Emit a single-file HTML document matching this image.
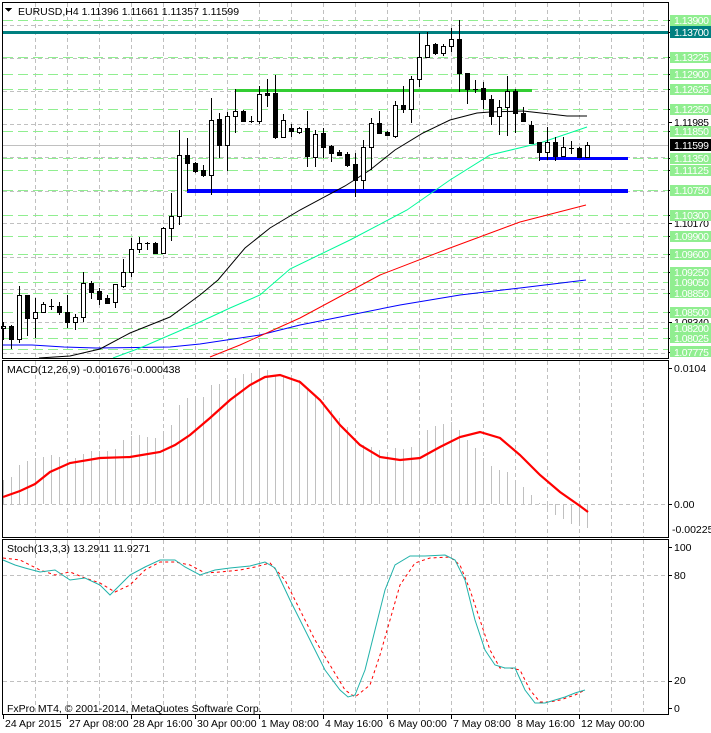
<!DOCTYPE html>
<html><head><meta charset="utf-8"><style>
html,body{margin:0;padding:0;background:#fff;width:711px;height:733px;overflow:hidden}
svg{display:block}
text{font-family:"Liberation Sans",sans-serif;font-size:10.5px}
</style></head><body>
<svg width="711" height="733" viewBox="0 0 711 733" xmlns="http://www.w3.org/2000/svg" shape-rendering="crispEdges">
<rect width="711" height="733" fill="#fff"/>
<g stroke="#c0c0c0" stroke-dasharray="4,3">
<path d="M35.5 3V358M67.5 3V358M99.5 3V358M131.5 3V358M163.5 3V358M195.5 3V358M227.5 3V358M259.5 3V358M291.5 3V358M323.5 3V358M355.5 3V358M387.5 3V358M419.5 3V358M451.5 3V358M483.5 3V358M515.5 3V358M547.5 3V358M579.5 3V358M611.5 3V358M643.5 3V358"/>
<path d="M35.5 361V537M67.5 361V537M99.5 361V537M131.5 361V537M163.5 361V537M195.5 361V537M227.5 361V537M259.5 361V537M291.5 361V537M323.5 361V537M355.5 361V537M387.5 361V537M419.5 361V537M451.5 361V537M483.5 361V537M515.5 361V537M547.5 361V537M579.5 361V537M611.5 361V537M643.5 361V537"/>
<path d="M35.5 540V714M67.5 540V714M99.5 540V714M131.5 540V714M163.5 540V714M195.5 540V714M227.5 540V714M259.5 540V714M291.5 540V714M323.5 540V714M355.5 540V714M387.5 540V714M419.5 540V714M451.5 540V714M483.5 540V714M515.5 540V714M547.5 540V714M579.5 540V714M611.5 540V714M643.5 540V714"/>
<path d="M3 25.5H668M3 58.5H668M3 91.5H668M3 124.5H668M3 157.5H668M3 191.5H668M3 223.5H668M3 257.5H668M3 289.5H668M3 322.5H668M3 353.5H668"/>
<path d="M3 504.5H668M3 575.5H668M3 681.5H668"/>
</g>
<g stroke="#90ee90" stroke-dasharray="10,5">
<path d="M3 20.5H668M3 57.5H668M3 74.5H668M3 89.5H668M3 109.5H668M3 131.5H668M3 158.5H668M3 170.5H668M3 190.5H668M3 215.5H668M3 236.5H668M3 254.5H668M3 272.5H668M3 282.5H668M3 293.5H668M3 312.5H668M3 328.5H668M3 338.5H668M3 349.5H668"/>
</g>
<path d="M3 145.5H668" stroke="#c0c0c0"/>
<rect x="3" y="31" width="665" height="3" fill="#008080"/>
<rect x="235" y="89" width="297" height="3" fill="#32cd32"/>
<rect x="187" y="189" width="441" height="4" fill="#0000ff"/>
<rect x="539" y="157" width="89" height="3" fill="#0000ff"/>
<g fill="none" shape-rendering="auto" stroke-width="1">
<polyline stroke="#0000ff" points="2,345 32,345 64,347 96,348 170,347 200,344 260,335 300,325 400,305 460,295 520,288 586,280"/>
<polyline stroke="#ff0000" points="210,357 240,345 300,318 380,275 450,248 520,222 586,205"/>
<polyline stroke="#00fa9a" points="113,358 140,348 170,335 200,322 230,308 260,295 290,269 350,240 407,210 450,180 490,155 540,143 587,127"/>
<polyline stroke="#000" points="39,358 70,356 100,349 130,333 170,317 200,295 218,280 245,248 270,228 300,210 345,186 370,170 395,150 423,133 450,120 477,113 490,112 523,111 550,114 567,116 587,116"/>
</g>
<path stroke="#000" fill="none" d="M3.5 322V340M11.5 325V349M19.5 286V343M27.5 295V336M35.5 298V338M43.5 302V313M51.5 299V310M49 306.5H54M59.5 302V315M67.5 295V328M75.5 314V330M83.5 272V322M91.5 281V299M99.5 288V305M107.5 295V303M115.5 284V308M123.5 259V288M131.5 238V277M139.5 237V253M147.5 242V250M145 243.5H150M155.5 242V254M163.5 227V254M171.5 193V241M179.5 130V225M187.5 138V191M195.5 162V173M203.5 165V177M211.5 98V195M219.5 113V158M227.5 112V171M235.5 89V133M243.5 110V122M251.5 116V123M249 121.5H254M259.5 86V124M267.5 79V107M275.5 75V139M283.5 114V137M291.5 124V137M299.5 127V134M307.5 111V167M315.5 130V167M323.5 128V158M331.5 145V162M339.5 150V156M347.5 152V167M355.5 153V197M363.5 140V189M371.5 118V170M379.5 111V134M387.5 131V136M395.5 101V138M403.5 86V113M411.5 76V123M419.5 33V87M427.5 32V57M435.5 43V55M443.5 44V56M451.5 28V52M459.5 20V92M467.5 73V104M475.5 80V93M473 89.5H478M483.5 82V109M491.5 95V125M499.5 100V135M507.5 76V136M515.5 89V133M523.5 107V122M531.5 121V143M539.5 142V161M547.5 127V160M555.5 137V161M563.5 137V157M571.5 141V154M569 148.5H574M579.5 147V158M587.5 142V158"/>
<g stroke="#000">
<g fill="#fff">
<rect x="1.5" y="326.5" width="4" height="2"/><rect x="17.5" y="295.5" width="4" height="44"/><rect x="33.5" y="312.5" width="4" height="6"/><rect x="41.5" y="304.5" width="4" height="8"/><rect x="73.5" y="317.5" width="4" height="5"/><rect x="81.5" y="283.5" width="4" height="34"/><rect x="113.5" y="284.5" width="4" height="18"/><rect x="121.5" y="272.5" width="4" height="14"/><rect x="129.5" y="249.5" width="4" height="23"/><rect x="137.5" y="243.5" width="4" height="6"/><rect x="161.5" y="228.5" width="4" height="25"/><rect x="169.5" y="216.5" width="4" height="12"/><rect x="177.5" y="155.5" width="4" height="61"/><rect x="209.5" y="120.5" width="4" height="55"/><rect x="225.5" y="116.5" width="4" height="29"/><rect x="233.5" y="111.5" width="4" height="5"/><rect x="257.5" y="94.5" width="4" height="27"/><rect x="281.5" y="120.5" width="4" height="17"/><rect x="297.5" y="128.5" width="4" height="4"/><rect x="313.5" y="134.5" width="4" height="23"/><rect x="361.5" y="147.5" width="4" height="33"/><rect x="369.5" y="123.5" width="4" height="24"/><rect x="393.5" y="105.5" width="4" height="31"/><rect x="409.5" y="79.5" width="4" height="30"/><rect x="417.5" y="57.5" width="4" height="22"/><rect x="425.5" y="45.5" width="4" height="12"/><rect x="441.5" y="46.5" width="4" height="7"/><rect x="449.5" y="39.5" width="4" height="7"/><rect x="497.5" y="107.5" width="4" height="9"/><rect x="505.5" y="91.5" width="4" height="16"/><rect x="545.5" y="142.5" width="4" height="10"/><rect x="561.5" y="147.5" width="4" height="9"/><rect x="585.5" y="145.5" width="4" height="12"/>
</g>
<g fill="#000">
<rect x="9.5" y="326.5" width="4" height="13"/><rect x="25.5" y="295.5" width="4" height="23"/><rect x="57.5" y="306.5" width="4" height="6"/><rect x="65.5" y="312.5" width="4" height="10"/><rect x="89.5" y="283.5" width="4" height="9"/><rect x="97.5" y="291.5" width="4" height="8"/><rect x="105.5" y="298.5" width="4" height="5"/><rect x="153.5" y="243.5" width="4" height="10"/><rect x="185.5" y="155.5" width="4" height="8"/><rect x="193.5" y="163.5" width="4" height="8"/><rect x="201.5" y="170.5" width="4" height="5"/><rect x="217.5" y="119.5" width="4" height="26"/><rect x="241.5" y="111.5" width="4" height="10"/><rect x="265.5" y="93.5" width="4" height="2"/><rect x="273.5" y="93.5" width="4" height="44"/><rect x="289.5" y="128.5" width="4" height="3"/><rect x="305.5" y="128.5" width="4" height="28"/><rect x="321.5" y="133.5" width="4" height="14"/><rect x="329.5" y="146.5" width="4" height="7"/><rect x="337.5" y="152.5" width="4" height="3"/><rect x="345.5" y="154.5" width="4" height="11"/><rect x="353.5" y="164.5" width="4" height="16"/><rect x="377.5" y="123.5" width="4" height="10"/><rect x="385.5" y="132.5" width="4" height="3"/><rect x="401.5" y="105.5" width="4" height="4"/><rect x="433.5" y="44.5" width="4" height="9"/><rect x="457.5" y="39.5" width="4" height="34"/><rect x="465.5" y="73.5" width="4" height="16"/><rect x="481.5" y="88.5" width="4" height="11"/><rect x="489.5" y="99.5" width="4" height="17"/><rect x="513.5" y="91.5" width="4" height="22"/><rect x="521.5" y="113.5" width="4" height="8"/><rect x="529.5" y="125.5" width="4" height="18"/><rect x="537.5" y="142.5" width="4" height="10"/><rect x="553.5" y="142.5" width="4" height="14"/><rect x="577.5" y="148.5" width="4" height="9"/>
</g>
</g>
<path stroke="#c0c0c0" d="M3.5 504V480M11.5 504V477M19.5 504V465M27.5 504V461M35.5 504V458M43.5 504V457M51.5 504V455M59.5 504V457M67.5 504V459M75.5 504V458M83.5 504V454M91.5 504V451M99.5 504V451M107.5 504V451M115.5 504V449M123.5 504V440M131.5 504V436M139.5 504V435M147.5 504V437M155.5 504V438M163.5 504V434M171.5 504V425M179.5 504V405M187.5 504V398M195.5 504V396M203.5 504V397M211.5 504V385M219.5 504V384M227.5 504V380M235.5 504V378M243.5 504V374M251.5 504V373M259.5 504V372M267.5 504V370M275.5 504V376M283.5 504V376M291.5 504V378M299.5 504V380M307.5 504V390M315.5 504V395M323.5 504V402M331.5 504V410M339.5 504V418M347.5 504V427M355.5 504V440M363.5 504V445M371.5 504V447M379.5 504V450M387.5 504V452M395.5 504V448M403.5 504V449M411.5 504V447M419.5 504V438M427.5 504V430M435.5 504V426M443.5 504V424M451.5 504V422M459.5 504V430M467.5 504V440M475.5 504V448M483.5 504V458M491.5 504V466M499.5 504V470M507.5 504V472M515.5 504V480M523.5 504V487M531.5 504V495M539.5 504V503M547.5 504V508M555.5 504V515M563.5 504V519M571.5 504V524M579.5 504V526M587.5 504V528"/>
<polyline shape-rendering="auto" fill="none" stroke="#ff0000" stroke-width="2.2" points="3,497 20,491 35,484 50,472 70,463 100,458 130,457 160,452 175,445 190,435 210,418 230,400 250,385 265,377 280,375 300,382 320,400 340,425 360,445 380,457 400,460 420,458 440,447 460,437 480,432 500,438 520,455 540,475 560,492 580,506 588,512"/>
<polyline shape-rendering="auto" fill="none" stroke="#ff0000" stroke-dasharray="3,3" points="3,558 20,560 40,570 55,575 70,572 85,578 100,583 115,592 130,585 145,570 160,562 175,562 190,565 205,573 220,572 240,570 255,567 270,563 285,580 300,610 315,640 330,665 345,690 355,697 370,685 380,655 390,620 400,585 415,563 430,558 450,557 460,565 470,590 480,620 490,650 500,668 510,668 520,670 530,690 540,702 550,702 560,700 575,695 585,690"/>
<polyline shape-rendering="auto" fill="none" stroke="#20b2aa" points="3,560 15,565 25,568 40,572 55,570 70,580 85,578 100,585 110,595 120,585 130,575 145,567 160,560 175,560 185,567 200,575 215,570 230,568 250,566 265,562 275,568 290,600 310,640 325,670 340,690 348,697 355,695 365,670 375,630 385,590 395,565 410,556 425,556 445,555 455,560 465,580 475,620 485,650 495,665 505,668 515,668 525,690 535,703 545,703 555,700 565,697 575,693 585,690"/>
<g fill="none" stroke="#000">
<rect x="2.5" y="2.5" width="666" height="356"/>
<rect x="2.5" y="360.5" width="666" height="177"/>
<rect x="2.5" y="539.5" width="666" height="175"/>
<path d="M3.5 715V719M67.5 715V719M131.5 715V719M195.5 715V719M259.5 715V719M323.5 715V719M387.5 715V719M451.5 715V719M515.5 715V719M579.5 715V719M668 20.5H672M668 32.5H672M668 57.5H672M668 74.5H672M668 89.5H672M668 109.5H672M668 122.5H672M668 131.5H672M668 158.5H672M668 170.5H672M668 190.5H672M668 215.5H672M668 223.5H672M668 236.5H672M668 254.5H672M668 272.5H672M668 293.5H672M668 312.5H672M668 322.5H672M668 338.5H672M668 352.5H672M668 368.5H672M668 504.5H672M668 547.5H672M668 575.5H672M668 681.5H672M668 708.5H672"/>
</g>
<path d="M5 8H12L8.5 12Z" fill="#000"/>
<text x="18" y="15" font-size="11">EURUSD,H4  1.11396 1.11661 1.11357 1.11599</text>
<text x="7" y="373" font-size="11">MACD(12,26,9) -0.001676 -0.000438</text>
<text x="7" y="552" font-size="11">Stoch(13,3,3) 13.2911 11.9271</text>
<text x="7" y="712" font-size="11">FxPro MT4, © 2001-2014, MetaQuotes Software Corp.</text>
<g font-size="10">
<text x="674" y="126" textLength="35">1.11985</text><text x="674" y="227" textLength="35">1.10170</text><text x="674" y="326" textLength="35">1.08340</text>
<text x="674" y="372">0.0104</text><text x="674" y="508">0.00</text><text x="672" y="533">-0.002251</text>
<text x="674" y="551">100</text><text x="674" y="579">80</text><text x="674" y="684">20</text><text x="674" y="712">0</text>
</g>
<g fill="#90ee90">
<rect x="670" y="15" width="41" height="11"/><rect x="670" y="52" width="41" height="11"/><rect x="670" y="69" width="41" height="11"/><rect x="670" y="84" width="41" height="11"/><rect x="670" y="104" width="41" height="11"/><rect x="670" y="126" width="41" height="11"/><rect x="670" y="153" width="41" height="11"/><rect x="670" y="165" width="41" height="11"/><rect x="670" y="185" width="41" height="11"/><rect x="670" y="210" width="41" height="11"/><rect x="670" y="231" width="41" height="11"/><rect x="670" y="249" width="41" height="11"/><rect x="670" y="267" width="41" height="10"/><rect x="670" y="277" width="41" height="10"/><rect x="670" y="287" width="41" height="11"/><rect x="670" y="307" width="41" height="11"/><rect x="670" y="323" width="41" height="10"/><rect x="670" y="333" width="41" height="10"/><rect x="670" y="346" width="41" height="11"/>
</g>
<rect x="670" y="26" width="41" height="12" fill="#008080"/>
<rect x="670" y="139" width="41" height="12" fill="#000"/>
<g fill="#fff" font-size="10">
<text x="674" y="24" textLength="35">1.13900</text><text x="674" y="36" textLength="35">1.13700</text><text x="674" y="61" textLength="35">1.13225</text><text x="674" y="78" textLength="35">1.12900</text><text x="674" y="93" textLength="35">1.12625</text><text x="674" y="113" textLength="35">1.12250</text><text x="674" y="135" textLength="35">1.11850</text><text x="674" y="149" textLength="35">1.11599</text><text x="674" y="162" textLength="35">1.11350</text><text x="674" y="174" textLength="35">1.11125</text><text x="674" y="194" textLength="35">1.10750</text><text x="674" y="219" textLength="35">1.10300</text><text x="674" y="240" textLength="35">1.09900</text><text x="674" y="258" textLength="35">1.09600</text><text x="674" y="276" textLength="35">1.09250</text><text x="674" y="286" textLength="35">1.09050</text><text x="674" y="297" textLength="35">1.08850</text><text x="674" y="316" textLength="35">1.08500</text><text x="674" y="332" textLength="35">1.08200</text><text x="674" y="342" textLength="35">1.08025</text><text x="674" y="356" textLength="35">1.07775</text>
</g>
<g font-size="10.5">
<text x="5" y="727">24 Apr 2015</text><text x="69" y="727">27 Apr 08:00</text><text x="133" y="727">28 Apr 16:00</text><text x="197" y="727">30 Apr 00:00</text><text x="261" y="727">1 May 08:00</text><text x="325" y="727">4 May 16:00</text><text x="389" y="727">6 May 00:00</text><text x="453" y="727">7 May 08:00</text><text x="517" y="727">8 May 16:00</text><text x="581" y="727">12 May 00:00</text>
</g>
</svg>
</body></html>
